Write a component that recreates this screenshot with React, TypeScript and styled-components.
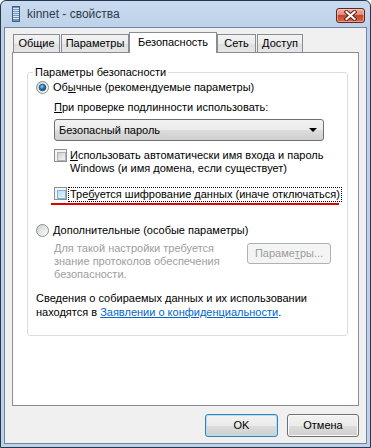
import styled, { createGlobalStyle } from 'styled-components';

const GlobalStyle = createGlobalStyle`
  html, body {
    margin: 0;
    padding: 0;
    background: #ffffff;
  }
  body {
    font-family: "Liberation Sans", Arial, sans-serif;
  }
  * {
    box-sizing: border-box;
  }
`

const Window = styled.div`
  display: flex;
  flex-direction: column;
  width: 371px;
  height: 448px;
  overflow: hidden;
  border: 1px solid #26384e;
  border-radius: 6px 6px 0 0;
  background: linear-gradient(#c9dbef, #bdd2e9 26px, #bdd2e9);
  font-size: 11px;
  line-height: 13px;
  color: #000000;
`

const TitleBar = styled.div`
  display: flex;
  align-items: center;
  height: 26px;
  padding: 0 5px 0 11px;
`

const TitleText = styled.span`
  margin-left: 7px;
  padding-top: 1px;
  font-size: 12px;
  color: #2f3b48;
`

const CloseButton = styled.div`
  display: flex;
  align-items: center;
  justify-content: center;
  width: 29px;
  height: 15px;
  margin: 2px 0 0 auto;
  border: 1px solid #6b2117;
  border-radius: 3px;
  background: linear-gradient(#eab3a8, #dd8b78 45%, #c7442b 50%, #d66a51);
  box-shadow: inset 0 0 0 1px rgba(255, 220, 210, 0.5);
`

const Body = styled.div`
  display: flex;
  flex-direction: column;
  flex: 1;
  margin: 0 3px 3px;
  padding: 4px 7px 0 7px;
  border: 1px solid #6f86a3;
  background: #f0f0f0;
`

const TabRow = styled.div`
  position: relative;
  z-index: 1;
  display: flex;
  align-items: flex-end;
  height: 20px;
  padding-left: 1px;
`

const Tab = styled.div<{ $w: number; $selected?: boolean }>`
  display: flex;
  align-items: center;
  justify-content: center;
  width: ${p => p.$w}px;
  height: ${p => (p.$selected ? 21 : 18)}px;
  margin: ${p => (p.$selected ? '0 0 -1px -1px' : '0 1px 0 0')};
  padding-bottom: ${p => (p.$selected ? 1 : 0)}px;
  border: 1px solid #898c95;
  border-bottom: none;
  background: ${p => (p.$selected ? '#ffffff' : 'linear-gradient(#f3f3f3, #ebebeb 50%, #dedede 50%, #e6e6e6)')};
`

const Panel = styled.div`
  flex-shrink: 0;
  height: 354px;
  border: 1px solid #898c95;
  background: #ffffff;
  overflow: hidden;
`

const GroupBox = styled.div`
  position: relative;
  height: 264px;
  margin: 19px 10px 0 14px;
  padding: 0 0 0 8px;
  border: 1px solid #d5dfe5;
  border-radius: 3px;
`

const Legend = styled.span`
  position: absolute;
  top: -7px;
  left: 5px;
  padding: 0 2px;
  background: #ffffff;
`

const OptionRow = styled.div<{ $top: number }>`
  display: flex;
  align-items: center;
  height: 13px;
  margin-top: ${p => p.$top}px;
  gap: 4px;
`

const Indent = styled.div`
  margin-left: 18px;
`

const FieldLabel = styled.div`
  margin-top: 7px;
`

const Select = styled.div`
  display: flex;
  align-items: center;
  justify-content: space-between;
  width: 270px;
  height: 22px;
  margin-top: 5px;
  padding: 0 6px 0 4px;
  border: 1px solid #707070;
  border-radius: 3px;
  background: linear-gradient(#f2f2f2, #ebebeb 50%, #dddddd 50%, #cfcfcf);
`

const Arrow = styled.span`
  width: 0;
  height: 0;
  border-left: 4px solid transparent;
  border-right: 4px solid transparent;
  border-top: 4px solid #000000;
`

const CheckRow = styled.div<{ $top: number }>`
  display: flex;
  align-items: flex-start;
  margin-top: ${p => p.$top}px;
`

const CheckBox = styled.div<{ $focus?: boolean }>`
  flex-shrink: 0;
  width: 13px;
  height: 13px;
  padding: 2px;
  border: 1px solid #8e8f8f;
  background: #f4f4f4;

  &::after {
    content: '';
    display: block;
    width: 100%;
    height: 100%;
    border: 1px solid ${p => (p.$focus ? '#79b4e6' : '#aeb3b9')};
    background: ${p => (p.$focus ? 'linear-gradient(135deg, #b9dcf6, #e6f3fd)' : 'linear-gradient(135deg, #cbcfd5, #f6f6f6)')};
  }
`

const CheckText = styled.div`
  margin-left: 3px;
`

const FocusText = styled.div`
  margin-left: 1px;
  padding: 0 1px;
  border: 1px dotted #000000;
`

const Marker = styled.div`
  width: 288px;
  height: 2px;
  margin: 1px 0 0 -3px;
  background: #e00000;
`

const AdvancedBlock = styled.div`
  display: flex;
  align-items: flex-start;
  justify-content: space-between;
  width: 277px;
  margin-top: 5px;
`

const DisabledText = styled.div`
  color: #9d9d9d;
`

const DisabledButton = styled.div`
  display: flex;
  align-items: center;
  justify-content: center;
  width: 84px;
  height: 21px;
  margin-top: 1px;
  border: 1px solid #adb2b5;
  border-radius: 3px;
  background: #f4f4f4;
  color: #9d9d9d;
`

const Note = styled.div`
  margin-top: 10px;
  line-height: 14px;
`

const Link = styled.a`
  color: #0066cc;
  text-decoration: underline;
`

const Key = styled.u`
  text-decoration: underline;
`

const ButtonRow = styled.div`
  display: flex;
  justify-content: flex-end;
  gap: 9px;
  margin-top: 8px;
`

const DialogButton = styled.div<{ $w: number; $default?: boolean }>`
  display: flex;
  align-items: center;
  justify-content: center;
  width: ${p => p.$w}px;
  height: 23px;
  border: 1px solid ${p => (p.$default ? '#3c7fb1' : '#707070')};
  border-radius: 3px;
  background: linear-gradient(#f2f2f2, #ebebeb 50%, #dddddd 50%, #cfcfcf);
  box-shadow: ${p => (p.$default ? 'inset 0 0 0 1px #a6e3f8' : 'inset 0 0 0 1px #fafafa')};
`

const Radio = ({ checked, id }: { checked?: boolean; id: string }) => (
   <svg width='13' height='13' viewBox='0 0 13 13'>
      <defs>
         <linearGradient id={`rb-${id}`} x1='0' y1='0' x2='1' y2='1'>
            <stop offset='0' stopColor='#c9cdd2' />
            <stop offset='1' stopColor='#ffffff' />
         </linearGradient>
         <radialGradient id={`rd-${id}`} cx='0.4' cy='0.35' r='0.7'>
            <stop offset='0' stopColor='#9fd6fb' />
            <stop offset='0.45' stopColor='#2a7fc0' />
            <stop offset='1' stopColor='#0e3e6b' />
         </radialGradient>
      </defs>
      <circle cx='6.5' cy='6.5' r='6' fill={`url(#rb-${id})`} stroke='#8e8f8f' />
      {checked && <circle cx='6.5' cy='6.5' r='3.3' fill={`url(#rd-${id})`} stroke='#20507c' strokeWidth='0.8' />}
   </svg>
)

const WindowIcon = () => (
   <svg width='8' height='16' viewBox='0 0 8 16'>
      <rect x='0.5' y='0.5' width='7' height='15' fill='#6f95bf' stroke='#3d5f86' />
      <rect x='1' y='2' width='6' height='1' fill='#d7e6f5' />
      <rect x='1' y='4' width='6' height='1' fill='#d7e6f5' />
      <rect x='1' y='6' width='6' height='1' fill='#d7e6f5' />
      <rect x='1' y='8' width='6' height='1' fill='#d7e6f5' />
      <rect x='1' y='10' width='6' height='1' fill='#d7e6f5' />
      <rect x='1' y='12' width='6' height='1' fill='#d7e6f5' />
   </svg>
)

const CloseGlyph = () => (
   <svg width='13' height='11' viewBox='0 0 13 11'>
      <path d='M2.5 2 L10.5 9 M10.5 2 L2.5 9' stroke='#5a1b12' strokeWidth='4' strokeLinecap='square' />
      <path d='M2.5 2 L10.5 9 M10.5 2 L2.5 9' stroke='#ffffff' strokeWidth='2.2' strokeLinecap='square' />
   </svg>
)

const App = () => {
   return (
      <>
         <GlobalStyle />
         <Window>
            <TitleBar>
               <WindowIcon />
               <TitleText>kinnet - свойства</TitleText>
               <CloseButton>
                  <CloseGlyph />
               </CloseButton>
            </TitleBar>

            <Body>
               <TabRow>
                  <Tab $w={47}>Общие</Tab>
                  <Tab $w={68}>Параметры</Tab>
                  <Tab $w={88} $selected>Безопасность</Tab>
                  <Tab $w={39}>Сеть</Tab>
                  <Tab $w={46}>Доступ</Tab>
               </TabRow>

               <Panel>
                  <GroupBox>
                     <Legend>Параметры безопасности</Legend>

                     <OptionRow $top={8}>
                        <Radio id='typical' checked />
                        <span>Об<Key>ы</Key>чные (рекомендуемые параметры)</span>
                     </OptionRow>

                     <Indent>
                        <FieldLabel>
                           <Key>П</Key>ри проверке подлинности использовать:
                        </FieldLabel>
                        <Select>
                           <span>Безопасный пароль</span>
                           <Arrow />
                        </Select>

                        <CheckRow $top={8}>
                           <CheckBox />
                           <CheckText>
                              <Key>И</Key>спользовать автоматически имя входа и пароль<br />
                              Windows (и имя домена, если существует)
                           </CheckText>
                        </CheckRow>

                        <CheckRow $top={12}>
                           <CheckBox $focus />
                           <FocusText>
                              Тре<Key>б</Key>уется шифрование данных (иначе отключаться)
                           </FocusText>
                        </CheckRow>
                        <Marker />
                     </Indent>

                     <OptionRow $top={19}>
                        <Radio id='custom' />
                        <span><Key>Д</Key>ополнительные (особые параметры)</span>
                     </OptionRow>

                     <Indent>
                        <AdvancedBlock>
                           <DisabledText>
                              Для такой настройки требуется<br />
                              знание протоколов обеспечения<br />
                              безопасности.
                           </DisabledText>
                           <DisabledButton>
                              Параме<Key>т</Key>ры...
                           </DisabledButton>
                        </AdvancedBlock>
                     </Indent>

                     <Note>
                        Сведения о собираемых данных и их использовании<br />
                        находятся в <Link>Заявлении о конфиденциальности</Link>.
                     </Note>
                  </GroupBox>
               </Panel>

               <ButtonRow>
                  <DialogButton $w={73} $default>OK</DialogButton>
                  <DialogButton $w={72}>Отмена</DialogButton>
               </ButtonRow>
            </Body>
         </Window>
      </>
   )
}

export default App;
